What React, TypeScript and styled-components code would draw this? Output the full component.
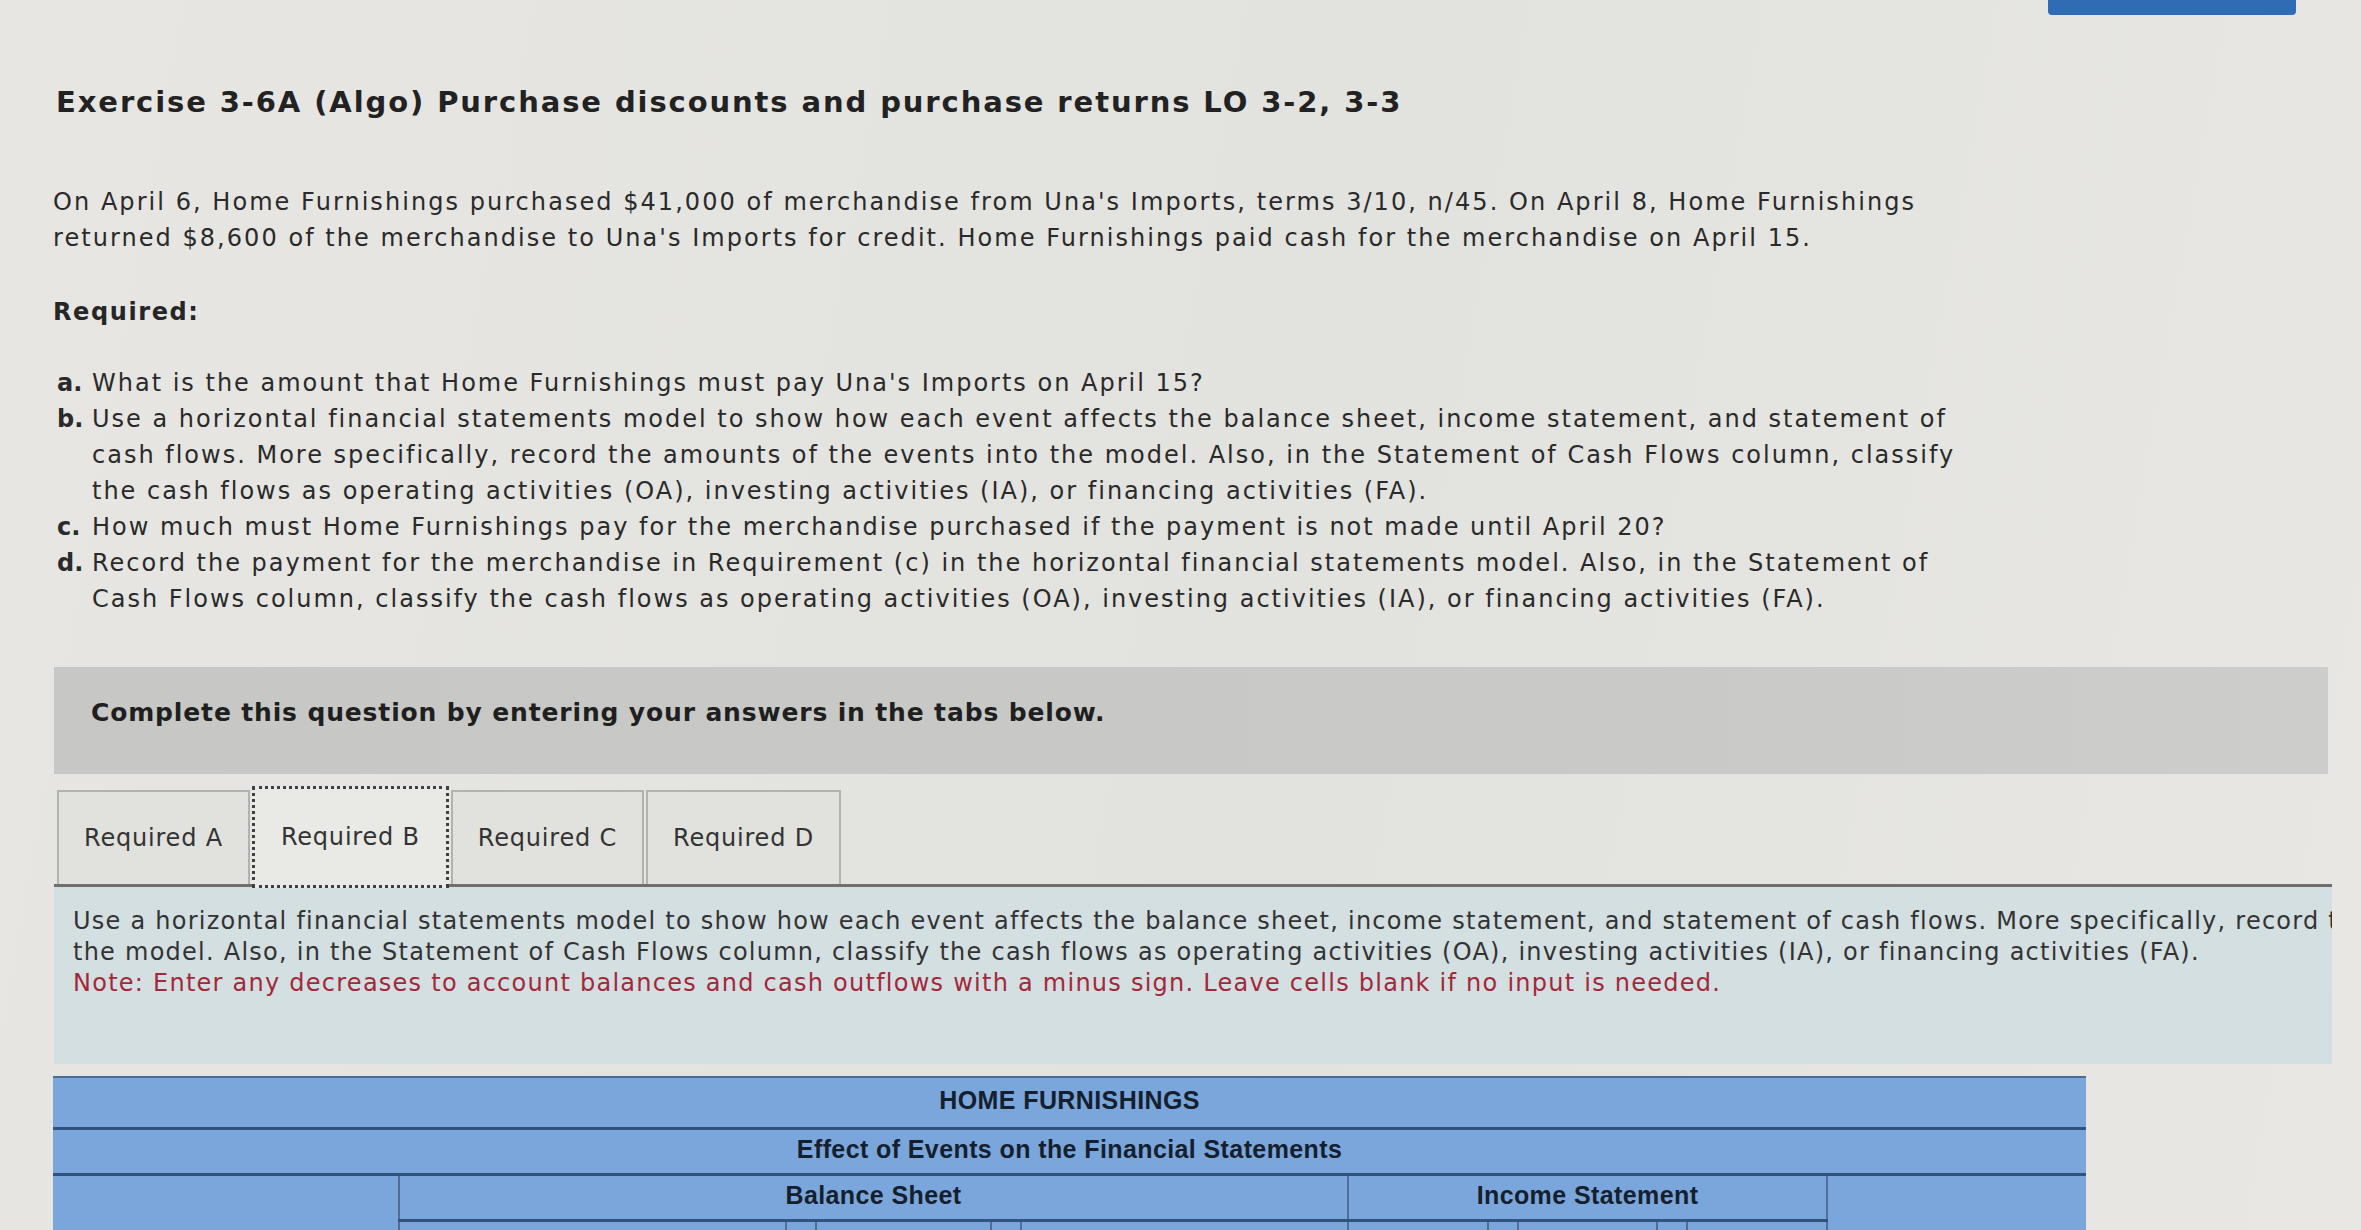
import React from "react";
import styled, { createGlobalStyle } from "styled-components";

const GlobalStyle = createGlobalStyle`
  html, body {
    margin: 0;
    padding: 0;
    background: #e4e4e1;
  }
  body {
    width: 2361px;
    height: 1230px;
    overflow: hidden;
    font-family: "DejaVu Sans", Verdana, sans-serif;
    color: #262626;
  }
`;

const Page = styled.div`
  width: 2361px;
  height: 1230px;
  overflow: hidden;
  background: linear-gradient(100deg, #e7e6e3 0%, #e2e2df 55%, #e8e7e4 100%);
`;

const TopBar = styled.div`
  display: flex;
  justify-content: flex-end;
  height: 15px;
  padding-right: 65px;
`;

const TopButton = styled.div`
  width: 248px;
  height: 15px;
  background: #2f6cb3;
  border-radius: 0 0 4px 4px;
`;

const Content = styled.div`
  width: 2278px;
  padding-left: 53px;
`;

const Title = styled.h1`
  margin: 69px 0 0 3px;
  font-family: "DejaVu Sans", sans-serif;
  font-weight: 700;
  font-size: 29px;
  letter-spacing: 1.9px;
  line-height: 36px;
  color: #222;
  white-space: nowrap;
`;

const Intro = styled.div`
  margin-top: 64px;
  font-size: 24px;
  letter-spacing: 2.05px;
  line-height: 36px;
  color: #2a2a2a;
`;

const Line = styled.div`
  white-space: nowrap;
`;

const RequiredLabel = styled.div`
  margin-top: 38px;
  font-size: 24px;
  font-weight: 700;
  letter-spacing: 1.6px;
  line-height: 36px;
  color: #262626;
`;

const ReqList = styled.div`
  margin-top: 35px;
  display: flex;
  flex-direction: column;
  font-size: 24px;
  letter-spacing: 2px;
  line-height: 36px;
  color: #2a2a2a;
`;

const ReqItem = styled.div`
  display: grid;
  grid-template-columns: 35px 1fr;
  padding-left: 4px;
`;

const Marker = styled.span`
  font-weight: 700;
  letter-spacing: 0;
`;

const Instruction = styled.div`
  margin: 50px 0 0 1px;
  height: 107px;
  box-sizing: border-box;
  width: 2274px;
  padding: 31px 37px 0;
  background: linear-gradient(90deg, #c7c8c5 0%, #c9cac7 70%, #cdcecb 100%);
  font-weight: 700;
  font-size: 25px;
  letter-spacing: 0.85px;
  line-height: 30px;
  color: #1f1f1f;
  white-space: nowrap;
`;

const TabRow = styled.div`
  margin-top: 12px;
  display: flex;
  align-items: flex-end;
  gap: 2px;
  padding-left: 4px;
  height: 98px;
`;

const Tab = styled.div<{ $active?: boolean }>`
  box-sizing: border-box;
  display: flex;
  align-items: center;
  justify-content: center;
  padding: 0 ${(p) => (p.$active ? 26 : 25)}px;
  font-size: 24px;
  letter-spacing: 0.8px;
  color: #333;
  white-space: nowrap;
  height: ${(p) => (p.$active ? "102px" : "94px")};
  margin-bottom: ${(p) => (p.$active ? "-4px" : "0")};
  background: ${(p) => (p.$active ? "#e9e9e6" : "#e1e1de")};
  border: ${(p) => (p.$active ? "3px dotted #404040" : "2px solid #b2b2b0")};
  border-bottom: ${(p) => (p.$active ? "3px dotted #404040" : "none")};
  position: relative;
  z-index: ${(p) => (p.$active ? 2 : 1)};
`;

const TabPanel = styled.div`
  box-sizing: border-box;
  height: 180px;
  width: 2278px;
  margin-left: 1px;
  border-top: 3px solid #6f6f6d;
  background: #d4dfe2;
  padding: 19px 0 0 19px;
  overflow: hidden;
  font-size: 24px;
  letter-spacing: 1.25px;
  line-height: 31px;
  color: #333;
`;

const Note = styled.div`
  white-space: nowrap;
  color: #a3283a;
`;

const ModelTable = styled.table`
  margin-top: 12px;
  width: 2033px;
  table-layout: fixed;
  border-collapse: collapse;
  background: #7ba6db;
  font-family: "Liberation Sans", Arial, sans-serif;
  font-weight: 700;
  font-size: 25px;
  letter-spacing: 0.4px;
  color: #15202e;
  border-top: 2px solid #4a6c95;
`;

const HeadCell = styled.td<{ $h?: number; $line?: boolean }>`
  height: ${(p) => p.$h ?? 42}px;
  padding: 0 0 4px;
  text-align: center;
  vertical-align: middle;
  border-bottom: ${(p) => (p.$line === false ? "none" : "3px solid #30527c")};
  border-left: 2px solid #4f6f95;
  &:first-child {
    border-left: none;
  }
`;

const SubCell = styled.td`
  height: 80px;
  padding: 6px 0 0;
  text-align: center;
  vertical-align: top;
  border-left: 2px solid #4f6f95;
`;

const CashCell = styled.td`
  padding: 52px 8px 0;
  text-align: center;
  vertical-align: top;
  border-left: 2px solid #4f6f95;
  line-height: 28px;
`;

const tabs = ["Required A", "Required B", "Required C", "Required D"];

const items: { m: string; lines: string[] }[] = [
  { m: "a.", lines: ["What is the amount that Home Furnishings must pay Una's Imports on April 15?"] },
  {
    m: "b.",
    lines: [
      "Use a horizontal financial statements model to show how each event affects the balance sheet, income statement, and statement of",
      "cash flows. More specifically, record the amounts of the events into the model. Also, in the Statement of Cash Flows column, classify",
      "the cash flows as operating activities (OA), investing activities (IA), or financing activities (FA).",
    ],
  },
  { m: "c.", lines: ["How much must Home Furnishings pay for the merchandise purchased if the payment is not made until April 20?"] },
  {
    m: "d.",
    lines: [
      "Record the payment for the merchandise in Requirement (c) in the horizontal financial statements model. Also, in the Statement of",
      "Cash Flows column, classify the cash flows as operating activities (OA), investing activities (IA), or financing activities (FA).",
    ],
  },
];

const colWidths = [346, 387, 30, 175, 30, 327, 140, 30, 139, 30, 140, 259];

export default function App() {
  return (
    <>
      <GlobalStyle />
      <Page>
        <TopBar>
          <TopButton />
        </TopBar>
        <Content>
          <Title>Exercise 3-6A (Algo) Purchase discounts and purchase returns LO 3-2, 3-3</Title>
          <Intro>
            <Line>
              On April 6, Home Furnishings purchased $41,000 of merchandise from Una's Imports, terms 3/10, n/45. On April 8, Home Furnishings
            </Line>
            <Line>returned $8,600 of the merchandise to Una's Imports for credit. Home Furnishings paid cash for the merchandise on April 15.</Line>
          </Intro>
          <RequiredLabel>Required:</RequiredLabel>
          <ReqList>
            {items.map((it) => (
              <ReqItem key={it.m}>
                <Marker>{it.m}</Marker>
                <div>
                  {it.lines.map((l, i) => (
                    <Line key={i}>{l}</Line>
                  ))}
                </div>
              </ReqItem>
            ))}
          </ReqList>
          <Instruction>Complete this question by entering your answers in the tabs below.</Instruction>
          <TabRow>
            {tabs.map((t) => (
              <Tab key={t} $active={t === "Required B"}>
                {t}
              </Tab>
            ))}
          </TabRow>
          <TabPanel>
            <Line>
              Use a horizontal financial statements model to show how each event affects the balance sheet, income statement, and statement of cash flows. More specifically, record the amounts of the events into
            </Line>
            <Line>
              the model. Also, in the Statement of Cash Flows column, classify the cash flows as operating activities (OA), investing activities (IA), or financing activities (FA).
            </Line>
            <Note>Note: Enter any decreases to account balances and cash outflows with a minus sign. Leave cells blank if no input is needed.</Note>
          </TabPanel>
          <ModelTable>
            <colgroup>
              {colWidths.map((w, i) => (
                <col key={i} style={{ width: w }} />
              ))}
            </colgroup>
            <tbody>
              <tr>
                <HeadCell colSpan={12} $h={45}>
                  HOME FURNISHINGS
                </HeadCell>
              </tr>
              <tr>
                <HeadCell colSpan={12} $h={39}>
                  Effect of Events on the Financial Statements
                </HeadCell>
              </tr>
              <tr>
                <HeadCell rowSpan={2} $line={false} />
                <HeadCell colSpan={5} $h={39}>
                  Balance Sheet
                </HeadCell>
                <HeadCell colSpan={5} $h={39}>
                  Income Statement
                </HeadCell>
                <CashCell rowSpan={2}>Statement of Cash Flows</CashCell>
              </tr>
              <tr>
                <SubCell />
                <SubCell />
                <SubCell />
                <SubCell />
                <SubCell>Stockholders' Equity</SubCell>
                <SubCell />
                <SubCell />
                <SubCell />
                <SubCell />
                <SubCell />
              </tr>
            </tbody>
          </ModelTable>
        </Content>
      </Page>
    </>
  );
}
